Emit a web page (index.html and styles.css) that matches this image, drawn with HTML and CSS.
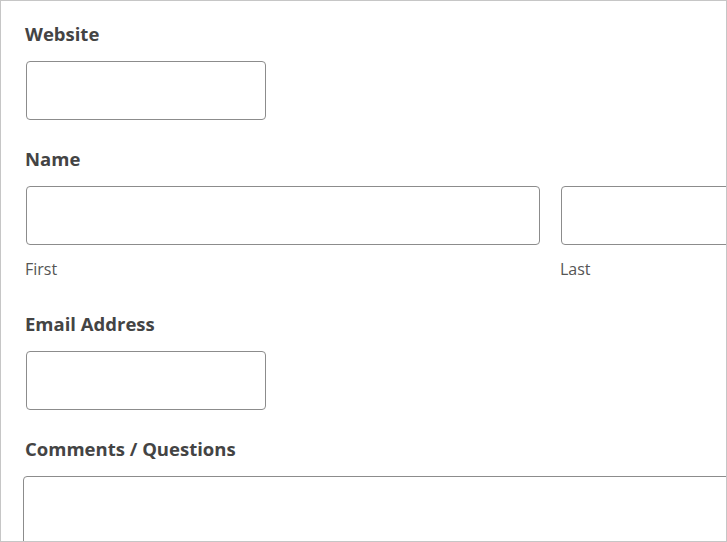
FILE: index.html
```html
<!DOCTYPE html>
<html lang="en">
    <head>
        <meta charset="UTF-8">
        <title>Contact form</title>
        <meta name="viewport" content="width=device-width,initial-scale=1.0">
        <link rel="stylesheet" href="styles.css">
    </head>
    <body>
        <div class="frame">
            <form class="form">
                <div class="field">
                    <label class="field-label" for="website">Website</label>
                    <input type="text" id="website" class="short">
                </div>
                <div class="field name-field">
                    <div class="field-label">Name</div>
                    <div class="name-row">
                        <div class="name-part">
                            <input type="text" id="firstName">
                            <label class="sub-label" for="firstName">First</label>
                        </div>
                        <div class="name-part">
                            <input type="text" id="lastName">
                            <label class="sub-label" for="lastName">Last</label>
                        </div>
                    </div>
                </div>
                <div class="field">
                    <label class="field-label" for="email">Email Address</label>
                    <input type="email" id="email" class="short">
                </div>
                <div class="field">
                    <label class="field-label" for="comments">Comments / Questions</label>
                    <textarea id="comments"></textarea>
                </div>
            </form>
        </div>
    </body>
</html>
```

FILE: styles.css
```css
html, body{
    margin: 0;
    padding: 0;
    background: #fff;
}
.frame{
    box-sizing: border-box;
    width: 727px;
    height: 542px;
    border: 1px solid #c6c6c6;
    overflow: hidden;
    font-family: "Open Sans", "Noto Sans", sans-serif;
    color: #444;
}
.form{
    padding: 19px 0 0 24px;
    margin: 0;
}
.field{
    margin-bottom: 25px;
}
.name-field{
    margin-bottom: 29px;
}
.field-label{
    display: block;
    font-size: 18.5px;
    font-weight: bold;
    line-height: 28px;
    margin-bottom: 13px;
}
input, textarea{
    box-sizing: border-box;
    display: block;
    height: 59px;
    margin: 0 0 0 1px;
    border: 1px solid #8c8c8c;
    border-radius: 4px;
    background: #fff;
    font: inherit;
}
input.short{
    width: 240px;
}
.name-row{
    display: flex;
    gap: 21px;
}
.name-part{
    flex: none;
    width: 514px;
}
.name-part>input{
    width: 514px;
}
.sub-label{
    display: block;
    margin-top: 12px;
    font-size: 16px;
    line-height: 24px;
    color: #555;
}
textarea{
    width: 760px;
    height: 120px;
    margin-left: -2px;
    resize: none;
}
```
